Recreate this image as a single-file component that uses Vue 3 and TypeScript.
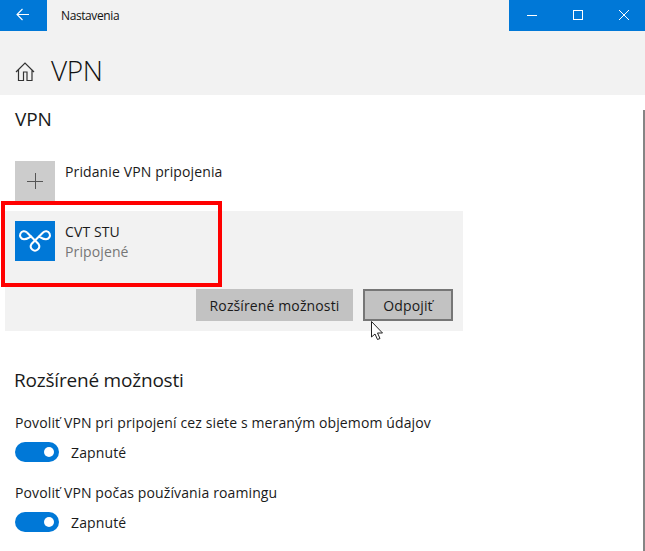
<script setup lang="ts">
const toggles = [
  { label: 'Povoliť VPN pri pripojení cez siete s meraným objemom údajov', state: 'Zapnuté' },
  { label: 'Povoliť VPN počas používania roamingu', state: 'Zapnuté' },
]
</script>

<template>
  <div class="window">
    <header class="head">
      <div class="titlebar">
        <button class="back" aria-label="Späť">
          <svg width="15" height="15" viewBox="0 0 15 15" fill="none" stroke="#fff" stroke-width="1.1">
            <path d="M1.500 6.500H13M6.500 1 1 6.500 6.500 12" />
          </svg>
        </button>
        <span class="app">Nastavenia</span>
        <div class="controls">
          <span class="ctl">
            <svg width="12" height="12" viewBox="0 0 12 12" fill="none" stroke="#fff"><path d="M1 6.500h10" /></svg>
          </span>
          <span class="ctl">
            <svg width="12" height="12" viewBox="0 0 12 12" fill="none" stroke="#fff"><rect x="1.500" y="1.500" width="9" height="9" /></svg>
          </span>
          <span class="ctl">
            <svg width="12" height="12" viewBox="0 0 12 12" fill="none" stroke="#fff"><path d="M1 1l10 10M11 1 1 11" /></svg>
          </span>
        </div>
      </div>
      <div class="pagehead">
        <svg class="home" width="20" height="20" viewBox="0 0 20 20" fill="none" stroke="#333" stroke-width="1.200">
          <path d="M1 11 10 2l9 9M3.500 8.500v11h5v-8.500h3.500v8.500h5v-11" />
        </svg>
        <h1>VPN</h1>
      </div>
    </header>

    <main class="content">
      <h2 class="section">VPN</h2>

      <div class="row add">
        <div class="tile tile-add">
          <svg width="16" height="16" viewBox="0 0 16 16" stroke="#555" stroke-width="1"><path d="M8.500 0v16M0 8.500h16" /></svg>
        </div>
        <div class="row-text">Pridanie VPN pripojenia</div>
      </div>

      <div class="panel">
        <div class="row conn">
          <div class="tile tile-vpn">
            <svg width="40" height="40" viewBox="0 0 40 40" fill="none" stroke="#fff" stroke-width="2">
              <path d="M12 11.500 23.500 23A4.200 4.200 0 1 1 16.500 23L28 11.500A4 4 0 1 1 31 18.200C27.500 18.200 25.500 16.500 23.200 15" />
              <path d="M12 11.500A4 4 0 1 0 9 18.200C12.500 18.200 14.500 16.500 16.800 15" />
            </svg>
          </div>
          <div class="row-text">
            <div>CVT STU</div>
            <div class="status">Pripojené</div>
          </div>
        </div>
        <div class="actions">
          <button class="btn wide">Rozšírené možnosti</button>
          <button class="btn focus">Odpojiť</button>
        </div>
        <svg class="cursor" width="13" height="19" viewBox="0 0 13 19">
          <path d="M.500.500v15.500l3.500-3 2.500 5.500 2.500-1-2.500-5.500h5z" fill="#fff" stroke="#222" stroke-width="1" />
        </svg>
      </div>

      <div class="redbox"></div>

      <h2 class="options">Rozšírené možnosti</h2>
      <div class="opts">
        <div v-for="t in toggles" :key="t.label" class="opt">
          <div class="opt-label">{{ t.label }}</div>
          <div class="toggle-row">
            <span class="toggle"><span class="knob"></span></span>
            <span>{{ t.state }}</span>
          </div>
        </div>
      </div>

      <div class="scrollbar"></div>
    </main>
  </div>
</template>

<style>
html, body { margin: 0; background: #fff; overflow: hidden; }
</style>

<style scoped>
.window {
  width: 645px;
  height: 551px;
  overflow: hidden;
  font-family: "Open Sans", "Noto Sans", sans-serif;
  color: #1a1a1a;
  font-size: 14px;
  letter-spacing: 0.12px;
}
.head { background: #f2f2f2; height: 95px; }
.titlebar { display: flex; align-items: center; height: 31px; }
.back {
  width: 47px; height: 31px; border: 0; padding: 0;
  background: #0078d7;
  display: flex; align-items: center; justify-content: center;
}
.app { margin-left: 14px; font-size: 12px; letter-spacing: -0.4px; color: #111; }
.controls { margin-left: auto; display: flex; align-items: flex-start; padding-top: 9px; box-sizing: border-box; width: 136px; background: #0078d7; height: 31px; }
.ctl { width: 46px; flex: none; display: flex; justify-content: center; }
.pagehead { display: flex; align-items: center; height: 64px; padding-left: 15px; gap: 16px; }
.home { flex: none; margin-top: 16px; }
h1 { margin: 14px 0 0; font-size: 28px; font-weight: 300; line-height: 36px; letter-spacing: -0.4px; color: #111; }
.content { position: relative; height: 456px; }
.section { margin: 0; padding: 12px 0 0 15px; font-size: 19px; font-weight: 400; line-height: 24px; letter-spacing: -0.15px; }
.row { display: flex; gap: 10px; }
.add { margin-top: 30px; padding-left: 15px; height: 40px; }
.tile { width: 40px; height: 40px; flex: none; display: flex; align-items: center; justify-content: center; }
.tile-add { background: #cccccc; }
.tile-vpn { background: #0078d7; }
.row-text { line-height: 20px; margin-top: 1px; }
.status { color: #767676; }
.panel {
  position: relative;
  margin: 10px 0 0 5px;
  width: 458px;
  height: 120px;
  background: #f2f2f2;
  box-sizing: border-box;
  padding: 10px;
}
.actions { display: flex; justify-content: flex-end; gap: 10px; margin-top: 27px; }
.btn {
  height: 32px; border: 0; background: #c2c2c2; color: #1a1a1a;
  font: inherit; letter-spacing: inherit; padding: 0;
}
.wide { width: 157px; }
.focus { width: 90px; border: 2px solid #767676; }
.cursor { position: absolute; left: 366px; top: 110px; z-index: 3; }
.redbox {
  position: absolute; left: 1px; top: 106px; width: 221px; height: 86px;
  box-sizing: border-box; border: 4px solid #f00;
}
.options { margin: 37px 0 21px 14px; font-size: 19px; font-weight: 400; line-height: 24px; letter-spacing: -0.2px; }
.opts { display: flex; flex-direction: column; gap: 20px; padding-left: 15px; }
.opt-label { line-height: 20px; margin-bottom: 8px; }
.toggle-row { display: flex; align-items: center; gap: 12px; height: 22px; }
.toggle { width: 44px; height: 20px; border-radius: 10px; background: #0078d7; position: relative; display: block; }
.knob { position: absolute; right: 5px; top: 5px; width: 10px; height: 10px; border-radius: 50%; background: #fff; }
.scrollbar { position: absolute; right: 0; top: 15px; width: 2px; height: 441px; background: #858585; }
</style>
